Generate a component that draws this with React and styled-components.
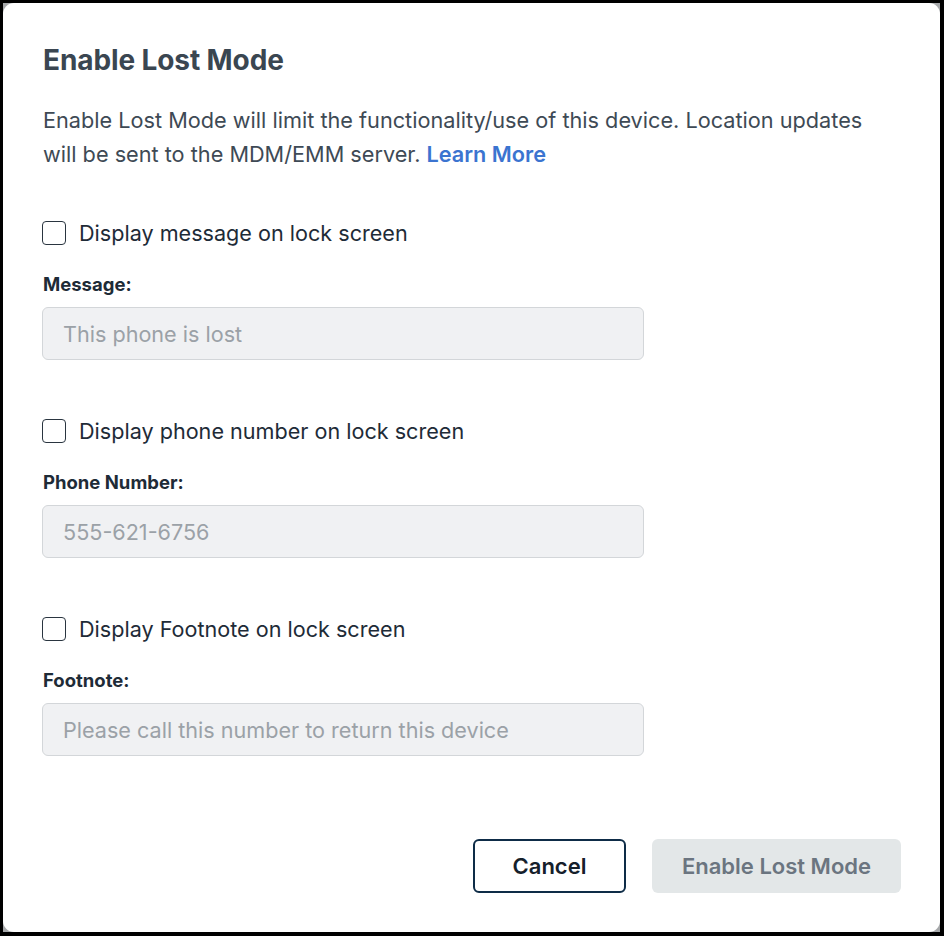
import React from "react";
import styled, { createGlobalStyle } from "styled-components";

const Global = createGlobalStyle`
  html, body { margin: 0; padding: 0; background: #000; }
  body { font-family: Inter, "Noto Sans", "Liberation Sans", sans-serif; -webkit-font-smoothing: antialiased; }
  * { box-sizing: border-box; }
`;

const Frame = styled.div`
  width: 944px;
  height: 936px;
  padding: 3px 4px 4px 3px;
  background: #000;
`;

const Backdrop = styled.div`
  width: 100%;
  height: 100%;
  background: #a6a8aa;
`;

const Modal = styled.div`
  width: 100%;
  height: 100%;
  background: #fff;
  border-radius: 11px;
  padding: 40px 39px 0 39px;
  display: flex;
  flex-direction: column;
`;

const Title = styled.h2`
  margin: 0 0 0 1px;
  font-size: 28px;
  line-height: 34px;
  font-weight: 700;
  color: #3a4651;
  letter-spacing: -0.1px;
`;

const Intro = styled.p`
  margin: 26px 0 0 1px;
  max-width: 845px;
  font-size: 21.7px;
  line-height: 34px;
  color: #3e4a55;
`;

const Link = styled.a`
  color: #3b74d0;
  font-weight: 600;
  text-decoration: none;
`;

const Section = styled.div`
  display: flex;
  flex-direction: column;
  margin-top: ${(p) => p.$top}px;
`;

const CheckRow = styled.label`
  display: flex;
  align-items: center;
  gap: 13px;
  font-size: 21.6px;
  line-height: 24px;
  color: #1e2b37;
`;

const Box = styled.span`
  width: 24px;
  height: 24px;
  border: 1.5px solid #2a3540;
  border-radius: 4px;
  background: #fff;
  flex: none;
`;

const FieldLabel = styled.div`
  margin-top: 28px;
  margin-left: 1px;
  font-size: 18.5px;
  line-height: 22px;
  font-weight: 700;
  color: #1e2b37;
`;

const Input = styled.div`
  margin-top: 12px;
  width: 602px;
  height: 53px;
  border: 1px solid #d3d6d9;
  border-radius: 6px;
  background: #f0f1f3;
  display: flex;
  align-items: center;
  padding: 0 20px;
  font-size: 21.6px;
  color: #9ba1a7;
`;

const Footer = styled.div`
  margin-top: auto;
  margin-bottom: 39px;
  display: flex;
  justify-content: flex-end;
  gap: 26px;
`;

const Button = styled.button`
  height: 54px;
  border-radius: 6px;
  font-family: inherit;
  font-size: 22px;
  font-weight: 600;
  padding: 0;
  width: ${(p) => p.$w}px;
  border: ${(p) => (p.$outline ? "2px solid #0e2c47" : "none")};
  background: ${(p) => (p.$outline ? "#fff" : "#e3e7e8")};
  color: ${(p) => (p.$outline ? "#15202b" : "#6b7580")};
`;

const fields = [
  { check: "Display message on lock screen", label: "Message:", value: "This phone is lost" },
  { check: "Display phone number on lock screen", label: "Phone Number:", value: "555-621-6756" },
  { check: "Display Footnote on lock screen", label: "Footnote:", value: "Please call this number to return this device" },
];

export default function App() {
  return (
    <>
      <Global />
      <Frame>
        <Backdrop>
          <Modal>
            <Title>Enable Lost Mode</Title>
            <Intro>
              Enable Lost Mode will limit the functionality/use of this device. Location updates will be sent to the MDM/EMM server.{" "}
              <Link href="#">Learn More</Link>
            </Intro>
            {fields.map((f, i) => (
              <Section key={f.label} $top={i === 0 ? 50 : 59}>
                <CheckRow>
                  <Box />
                  {f.check}
                </CheckRow>
                <FieldLabel>{f.label}</FieldLabel>
                <Input>{f.value}</Input>
              </Section>
            ))}
            <Footer>
              <Button $outline $w={153}>Cancel</Button>
              <Button $w={249}>Enable Lost Mode</Button>
            </Footer>
          </Modal>
        </Backdrop>
      </Frame>
    </>
  );
}
